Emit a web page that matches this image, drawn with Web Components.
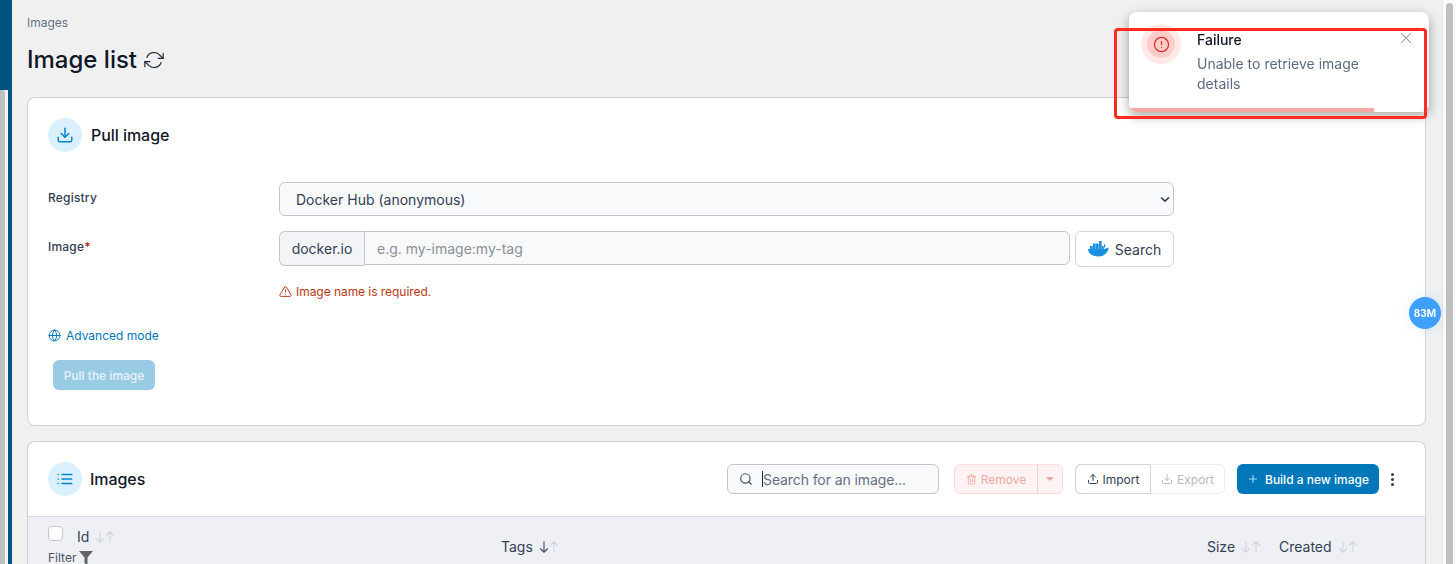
<!DOCTYPE html>
<html>
<head>
<meta charset="utf-8">
<title>Image list</title>
<style>
  html, body { margin: 0; height: 564px; overflow: hidden; }
  body { font-family: Inter, "Liberation Sans", sans-serif; background: #f0f0f0; color: #101828; }
</style>
</head>
<body>
<app-shell>
  <page-header title="Image list" crumb="Images"></page-header>
  <pull-card></pull-card>
  <images-card></images-card>
</app-shell>
<failure-toast title="Failure" message="Unable to retrieve image details"></failure-toast>
<task-bubble label="83M"></task-bubble>

<script>
const ICONS = {
  refresh: '<path d="M23 4v6h-6"/><path d="M1 20v-6h6"/><path d="M3.510 9a9 9 0 0 1 14.850-3.360L23 10"/><path d="M1 14l4.640 4.360A9 9 0 0 0 20.490 15"/>',
  download: '<path d="M21 15v4a2 2 0 0 1-2 2H5a2 2 0 0 1-2-2v-4"/><path d="M7 10l5 5 5-5"/><path d="M12 15V3"/>',
  upload: '<path d="M21 15v4a2 2 0 0 1-2 2H5a2 2 0 0 1-2-2v-4"/><path d="M17 8l-5-5-5 5"/><path d="M12 3v12"/>',
  list: '<path d="M8 6h13M8 12h13M8 18h13M3 6h.01M3 12h.01M3 18h.01"/>',
  alert: '<circle cx="12" cy="12" r="10"/><path d="M12 8v4M12 16h.01"/>',
  warn: '<path d="M10.3 3.9 1.8 18a2 2 0 0 0 1.7 3h17a2 2 0 0 0 1.7-3L13.7 3.9a2 2 0 0 0-3.4 0z"/><path d="M12 9v4M12 17h.01"/>',
  globe: '<circle cx="12" cy="12" r="10"/><path d="M2 12h20"/><path d="M12 2a15 15 0 0 1 4 10 15 15 0 0 1-4 10 15 15 0 0 1-4-10 15 15 0 0 1 4-10z"/>',
  search: '<circle cx="11" cy="11" r="8"/><path d="M21 21l-4.3-4.3"/>',
  trash: '<path d="M3 6h18"/><path d="M19 6v14a2 2 0 0 1-2 2H7a2 2 0 0 1-2-2V6"/><path d="M8 6V4a2 2 0 0 1 2-2h4a2 2 0 0 1 2 2v2"/><path d="M10 11v6M14 11v6"/>',
  plus: '<path d="M12 5v14M5 12h14"/>',
  close: '<path d="M18 6 6 18M6 6l12 12"/>',
  up: '<path d="M12 21V3M6 9l6-6 6 6"/>',
  down: '<path d="M12 3v18M6 15l6 6 6-6"/>'
};
const icon = (name, size, color, width = 2) =>
  `<svg width="${size}" height="${size}" viewBox="0 0 24 24" fill="none" stroke="${color}" stroke-width="${width}" stroke-linecap="round" stroke-linejoin="round" style="display:block;flex:none">${ICONS[name]}</svg>`;

class AppShell extends HTMLElement {
  constructor() {
    super();
    this.attachShadow({ mode: 'open' });
    this.shadowRoot.innerHTML = `
      <style>
        :host { display: flex; height: 564px; overflow: hidden; }
        .rail { width: 12px; flex: none; background: #00527f; position: relative; }
        .rail i { position: absolute; left: 0; top: 90px; bottom: 0; width: 8px; background: #f4f4f4; }
        .rail i::before { content: ""; position: absolute; left: 0; top: 0; bottom: 0; width: 5px; background: #bfbfbf; border-radius: 0 3px 0 0; }
        main { flex: 1; min-width: 0; padding: 0 16px 0 15px; display: flex; flex-direction: column; }
        .track { width: 14px; flex: none; background: #fafafa; border-left: 1px solid #e6e6e6; box-sizing: border-box; padding: 3px 3px 0 3px; }
        .track i { display: block; height: 100%; width: 7px; background: #bfbfbf; border-radius: 4px 4px 0 0; }
      </style>
      <div class="rail"><i></i></div>
      <main><slot></slot></main>
      <div class="track"><i></i></div>
    `;
  }
}
customElements.define('app-shell', AppShell);

class PageHeader extends HTMLElement {
  constructor() {
    super();
    this.attachShadow({ mode: 'open' });
  }
  connectedCallback() {
    this.shadowRoot.innerHTML = `
      <style>
        :host { display: block; flex: none; height: 97px; box-sizing: border-box; padding-top: 16px; }
        .crumb { font-size: 12px; line-height: 14px; color: #667085; }
        .row { display: flex; align-items: center; gap: 7px; margin-top: 14px; }
        h1 { margin: 0; font-size: 24px; line-height: 32px; font-weight: 500; color: #101828; }
      </style>
      <div class="crumb">${this.getAttribute('crumb')}</div>
      <div class="row"><h1>${this.getAttribute('title')}</h1>${icon('refresh', 20, '#1d2939', 1.4)}</div>
    `;
  }
}
customElements.define('page-header', PageHeader);

class CardTitle extends HTMLElement {
  constructor() {
    super();
    this.attachShadow({ mode: 'open' });
  }
  connectedCallback() {
    this.shadowRoot.innerHTML = `
      <style>
        :host { display: flex; align-items: center; gap: ${this.getAttribute('gap') || 9}px; }
        .badge { width: 34px; height: 34px; border-radius: 50%; background: #dbf0ff; display: flex; align-items: center; justify-content: center; }
        span { font-size: 16px; font-weight: 500; color: #101828; letter-spacing: -.05px; }
      </style>
      <div class="badge">${icon(this.getAttribute('icon'), 18, '#0086c9')}</div>
      <span><slot></slot></span>
    `;
  }
}
customElements.define('card-title', CardTitle);

class PullCard extends HTMLElement {
  constructor() {
    super();
    this.attachShadow({ mode: 'open' });
    this.shadowRoot.innerHTML = `
      <style>
        :host { display: block; height: 329px; box-sizing: border-box; background: #fff; border: 1px solid #cfd1d8; border-radius: 8px; padding: 20px 20px 0; flex: none; }
        .form { display: grid; grid-template-columns: 231px 895px; margin-top: 30px; row-gap: 15px; font-size: 14px; }
        label { font-size: 12px; font-weight: 500; color: #344054; padding-top: 8px; letter-spacing: .2px; }
        label b { color: #b42318; font-weight: 500; }
        .select { height: 34px; box-sizing: border-box; border: 1px solid #c4c5c9; border-radius: 6px; background: #f8f9fb; display: flex; align-items: center; justify-content: space-between; padding: 0 2px 0 16px; color: #344054; }
        .image { display: flex; height: 36px; }
        .addon { width: 85px; height: 35px; box-sizing: border-box; border: 1px solid #c4c5c9; border-right: 0; border-radius: 6px 0 0 6px; background: #f2f4f7; display: flex; align-items: center; justify-content: center; color: #344054; }
        .input { width: 706px; height: 34px; box-sizing: border-box; border: 1px solid #c4c5c9; border-radius: 0 6px 6px 0; background: #f8f9fb; padding-left: 12px; display: flex; align-items: center; color: #8b8f96; }
        .search { margin-left: 5px; width: 99px; height: 36px; box-sizing: border-box; border: 1px solid #cfd4dd; border-radius: 6px; display: flex; align-items: center; justify-content: center; gap: 6px; color: #344054; }
        .error { grid-column: 2; display: flex; align-items: center; gap: 4px; font-size: 12px; color: #b93815; margin-top: 2px; letter-spacing: -.05px; }
        .advanced { display: flex; align-items: center; gap: 5px; font-size: 12px; color: #0078b5; margin-top: 29px; }
        .pull { margin: 17px 0 0 5px; width: 102px; height: 30px; border-radius: 6px; background: #99cbe5; color: #e8f3f9; font-size: 12px; font-weight: 500; display: flex; align-items: center; justify-content: center; }
      </style>
      <card-title icon="download">Pull image</card-title>
      <div class="form">
        <label>Registry</label>
        <div class="select"><span>Docker Hub (anonymous)</span>
          <svg width="12" height="12" viewBox="0 0 12 12" fill="none" stroke="#344054" stroke-width="1.7"><path d="M2 4.500 6 8.200l4-3.700"/></svg>
        </div>
        <label>Image<b>*</b></label>
        <div class="image">
          <div class="addon">docker.io</div>
          <div class="input">e.g. my-image:my-tag</div>
          <div class="search">
            <svg width="21" height="16" viewBox="0 0 21 16" fill="#1b8fe0"><path d="M0 8h16.200c.7 0 1.600-.4 2-1 .6.3 1.600.2 2.500-.4-.6 4.300-3.700 8.800-10 8.800C4 15.400 .4 13 0 8z"/><path d="M2 5.100h2.700v3H2zM5 5.100h2.700v3H5zM8 5.100h2.700v3H8zM11 5.100h2.700v3H11zM5 2.400h2.700v2.500H5zM8 2.400h2.700v2.500H8zM11 2.400h2.700v2.500H11zM11 0h2.700v2.200H11zM14 5.100h1.700v3H14zM16.200 2.500c.9.700 1.200 2 1.100 3.500l-1.400.9z"/></svg>
            Search
          </div>
        </div>
        <div class="error">${icon('warn', 13, '#b93815', 1.8)}Image name is required.</div>
      </div>
      <div class="advanced">${icon('globe', 13, '#0078b5', 1.8)}Advanced mode</div>
      <div class="pull">Pull the image</div>
    `;
  }
}
customElements.define('pull-card', PullCard);

class SortHead extends HTMLElement {
  constructor() {
    super();
    this.attachShadow({ mode: 'open' });
  }
  connectedCallback() {
    const active = this.hasAttribute('active');
    this.shadowRoot.innerHTML = `
      <style>
        :host { display: inline-flex; align-items: center; gap: 6px; font-size: 14px; color: #344054; }
        .arrows { display: flex; }
        svg { margin: 0 -2px; }
      </style>
      <span><slot></slot></span>
      <span class="arrows">${icon('down', 14, active ? '#475467' : '#d0d5dd', 2)}${icon('up', 14, '#d0d5dd', 2)}</span>
    `;
  }
}
customElements.define('sort-head', SortHead);

class ImagesCard extends HTMLElement {
  constructor() {
    super();
    this.attachShadow({ mode: 'open' });
    this.shadowRoot.innerHTML = `
      <style>
        :host { display: block; flex: none; margin-top: 15px; background: #fff; border: 1px solid #cfd1d8; border-bottom: 0; border-radius: 8px 8px 0 0; height: 160px; overflow: hidden; }
        .top { height: 75px; box-sizing: border-box; padding: 0 29px 0 20px; display: flex; align-items: center; border-bottom: 1px solid #d7dae0; }
        .tools { margin-left: auto; display: flex; align-items: center; font-size: 12px; }
        .find { width: 212px; height: 30px; box-sizing: border-box; border: 1px solid #c4c5c9; border-radius: 6px; background: #f8f9fb; display: flex; align-items: center; padding-left: 11px; gap: 9px; font-size: 14px; color: #667085; letter-spacing: -.1px; }
        .find i { width: 1px; height: 16px; background: #1d2939; margin-right: -9px; }
        .group { display: flex; height: 30px; box-sizing: border-box; border-radius: 6px; }
        .remove { margin-left: 15px; width: 109px; background: #fef3f2; border: 1px solid #fcdcd8; color: #eaa9a3; }
        .remove span { display: flex; align-items: center; justify-content: center; gap: 4px; width: 82px; border-right: 1px solid #fbcfc9; }
        .remove em { flex: 1; display: flex; align-items: center; justify-content: center; }
        .remove em::before { content: ""; border: 4px solid transparent; border-top: 4px solid #e9a49d; border-bottom: 0; }
        .port { margin-left: 12px; width: 150px; border: 1px solid #eaecf0; }
        .port span { display: flex; align-items: center; justify-content: center; gap: 4px; }
        .port .on { width: 74px; margin: -1px 0 -1px -1px; box-sizing: content-box; height: 28px; border: 1px solid #cfd4dd; border-radius: 6px 0 0 6px; color: #344054; }
        .port .off { flex: 1; color: #b6bac1; }
        .build { margin-left: 12px; width: 142px; height: 30px; border-radius: 6px; background: #0078b9; color: #fff; font-weight: 500; display: flex; align-items: center; justify-content: center; gap: 6px; }
        .more { margin-left: 9px; display: flex; flex-direction: column; gap: 2px; width: 8px; align-items: center; }
        .more i { width: 3px; height: 3px; border-radius: 50%; background: #344054; }
        .head { height: 60px; background: #eff0f5; display: grid; grid-template-columns: 453px 706px 72px auto; padding: 9px 0 0 20px; }
        .id { display: flex; flex-direction: column; gap: 5px; }
        .idrow { display: flex; align-items: flex-start; gap: 14px; }
        .idrow sort-head { margin-top: 2px; }
        .box { width: 15px; height: 15px; box-sizing: border-box; border: 1px solid #c4c7cf; border-radius: 4px; background: #fff; }
        .filter { display: flex; align-items: center; gap: 3px; font-size: 12px; color: #475467; }
        .cell { padding-top: 10px; }
      </style>
      <div class="top">
        <card-title icon="list" gap="8">Images</card-title>
        <div class="tools">
          <div class="find">${icon('search', 14, '#475467')}<i></i>Search for an image...</div>
          <div class="group remove"><span>${icon('trash', 11, '#eaa9a3')}Remove</span><em></em></div>
          <div class="group port"><span class="on">${icon('upload', 12, '#344054')}Import</span><span class="off">${icon('download', 12, '#b6bac1')}Export</span></div>
          <div class="build">${icon('plus', 12, '#b9dcef')}Build a new image</div>
          <div class="more"><i></i><i></i><i></i></div>
        </div>
      </div>
      <div class="head">
        <div class="id">
          <div class="idrow"><div class="box"></div><sort-head>Id</sort-head></div>
          <div class="filter">Filter
            <svg width="14" height="14" viewBox="0 0 14 14" fill="#5f6368"><path d="M0 0h14L8.500 6.500V14l-3-2V6.500z"/></svg>
          </div>
        </div>
        <div class="cell"><sort-head active>Tags</sort-head></div>
        <div class="cell"><sort-head>Size</sort-head></div>
        <div class="cell"><sort-head>Created</sort-head></div>
      </div>
    `;
  }
}
customElements.define('images-card', ImagesCard);

class FailureToast extends HTMLElement {
  constructor() {
    super();
    this.attachShadow({ mode: 'open' });
  }
  connectedCallback() {
    this.shadowRoot.innerHTML = `
      <style>
        :host { position: fixed; left: 1129px; top: 12px; width: 300px; height: 100px; box-sizing: border-box; background: #fff; border-radius: 8px; box-shadow: 0 4px 12px rgba(0,0,0,.35); padding: 18px 40px 0 68px; overflow: hidden; }
        .halo { position: absolute; left: 12px; top: 12px; width: 40px; height: 40px; border-radius: 50%; background: #fee9e7; display: flex; align-items: center; justify-content: center; }
        .halo div { width: 28px; height: 28px; border-radius: 50%; background: #fecdca; display: flex; align-items: center; justify-content: center; }
        .title { font-size: 14px; line-height: 20px; font-weight: 500; color: #101828; }
        .msg { font-size: 14px; line-height: 20px; color: #5d6b82; margin-top: 4px; }
        .close { position: absolute; right: 14px; top: 17px; }
        .progress { position: absolute; left: 1px; bottom: 0; width: 244px; height: 4px; background: #f3a8a3; }
      </style>
      <div class="halo"><div>${icon('alert', 17, '#d92d20', 1.8)}</div></div>
      <div class="title">${this.getAttribute('title')}</div>
      <div class="msg">${this.getAttribute('message')}</div>
      <div class="close">${icon('close', 18, '#8f8f8f', 1.4)}</div>
      <div class="progress"></div>
    `;
    // red annotation drawn over the screenshot
    const mark = document.createElement('div');
    mark.style.cssText = 'position:fixed;left:1114px;top:28px;width:313px;height:91px;box-sizing:border-box;border:3px solid #ff2a20;border-radius:4px;pointer-events:none';
    document.body.appendChild(mark);
  }
}
customElements.define('failure-toast', FailureToast);

class TaskBubble extends HTMLElement {
  constructor() {
    super();
    this.attachShadow({ mode: 'open' });
  }
  connectedCallback() {
    this.shadowRoot.innerHTML = `
      <style>
        :host { position: fixed; left: 1409px; top: 297px; width: 32px; height: 32px; border-radius: 50%; background: #40a0ff; color: #fff; font-size: 10px; font-weight: 700; display: flex; align-items: center; justify-content: center; box-shadow: 0 0 14px rgba(64,160,255,.15); }
      </style>
      ${this.getAttribute('label')}
    `;
  }
}
customElements.define('task-bubble', TaskBubble);
</script>
</body>
</html>
